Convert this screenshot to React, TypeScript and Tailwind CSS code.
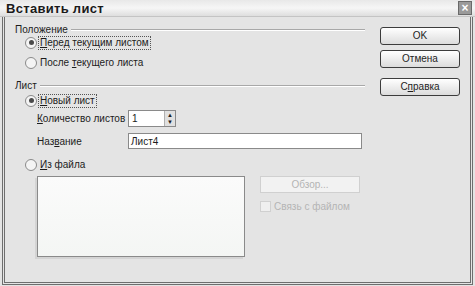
import React from "react";

function Radio({ checked, label, u }: { checked?: boolean; label: string; u: number }) {
  return (
    <div className="flex items-center gap-[1px] h-[13px]">
      <span className="w-[12px] h-[12px] rounded-full border border-[#8a8a8a] bg-[#f4f4f4] flex items-center justify-center">
        {checked && <span className="w-[5px] h-[5px] rounded-full bg-[#4a4a4a]" />}
      </span>
      <span className={checked ? "border border-dotted border-[#555] px-[1px] leading-[12px]" : "px-[2px] leading-[12px]"}>
        {label.slice(0, u - 1)}
        <span className="underline">{label.slice(u - 1, u)}</span>
        {label.slice(u)}
      </span>
    </div>
  );
}

function Legend({ text }: { text: string }) {
  return (
    <div className="flex items-center gap-[3px] h-[12px]">
      <span className="leading-[12px]">{text}</span>
      <div className="flex-1 border-t border-[#a8a8a8] border-b-white border-b h-0" />
    </div>
  );
}

function Btn({ label, u }: { label: string; u?: number }) {
  return (
    <button className="w-[80px] h-[18px] rounded-[3px] border border-[#3c3c3c] bg-gradient-to-b from-[#ffffff] to-[#dcdcdc] text-[10px] leading-[14px] text-[#1e1e1e]">
      {u !== undefined ? (
        <>
          {label.slice(0, u)}
          <span className="underline">{label.slice(u, u + 1)}</span>
          {label.slice(u + 1)}
        </>
      ) : (
        label
      )}
    </button>
  );
}

export default function App() {
  return (
    <div
      className="w-[475px] h-[286px] bg-[#e4e4e4] flex flex-col text-[10px] text-[#1c1c1c] overflow-hidden"
      style={{ fontFamily: '"Liberation Sans", Arial, sans-serif' }}
    >
      {/* title bar */}
      <div className="h-[17px] flex items-center justify-between bg-gradient-to-b from-[#e8e8e8] via-[#f6f6f6] to-[#dedede] border-b border-[#c4c4c4] pl-[6px] pr-[3px]">
        <span className="font-bold text-[13px] leading-[13px] tracking-[0.3px] text-[#1a1a1a]">
          Вставить лист
        </span>
        <span className="w-[14px] h-[14px] border border-[#6a6a6a] bg-[#9a9a9a] flex items-center justify-center text-white text-[12px] leading-[11px] font-bold">
          ×
        </span>
      </div>

      {/* window frame */}
      <div className="flex-1 mx-[2px] mb-[1px] border-l-[3px] border-r-[3px] border-b-[3px] border-double border-[#6e6e6e] flex">
        <div className="w-[360px] pl-[10px] pt-[7px] flex flex-col">
          <Legend text="Положение" />
          <div className="pl-[10px] flex flex-col gap-[7px]">
            <Radio checked label="Перед текущим листом" u={1} />
            <Radio label="После текущего листа" u={7} />
          </div>

          <div className="mt-[11px]">
            <Legend text="Лист" />
          </div>
          <div className="pl-[10px] pt-[2px] flex flex-col">
            <Radio checked label="Новый лист" u={1} />
            <div className="pl-[12px] pt-[3px] flex items-center h-[20px]">
              <span className="w-[91px] whitespace-nowrap">
                <span className="underline">К</span>оличество листов
              </span>
              <div className="w-[48px] h-[17px] border border-[#8a8a8a] bg-white flex items-center">
                <span className="flex-1 pl-[3px] leading-[11px]">1</span>
                <div className="w-[11px] h-[15px] flex flex-col border-l border-[#b0b0b0] bg-[#e0e0e0]">
                  <span className="flex-1 flex items-center justify-center text-[6px] leading-[6px]">▲</span>
                  <span className="flex-1 flex items-center justify-center text-[6px] leading-[6px]">▼</span>
                </div>
              </div>
            </div>
            <div className="pl-[12px] pt-[6px] flex items-center h-[22px]">
              <span className="w-[91px] whitespace-nowrap">
                Наз<span className="underline">в</span>ание
              </span>
              <div className="w-[234px] h-[16px] border border-[#8a8a8a] bg-white flex items-center pl-[2px] leading-[11px]">
                Лист4
              </div>
            </div>
            <div className="pt-[9px]">
              <Radio label="Из файла" u={1} />
            </div>
            <div className="pl-[12px] pt-[5px] flex gap-[15px]">
              <div className="w-[208px] h-[81px] border border-[#8a8a8a] bg-gradient-to-b from-[#fbfbfb] to-[#f4f6f4] shadow-[-2px_2px_0_#d4d4d4]" />
              <div className="flex flex-col gap-[6px]">
                <div className="w-[100px] h-[17px] border border-[#d0d0d0] bg-[#f2f2f2] text-[#b4b4b4] flex items-center justify-center leading-[11px]">
                  Обзор...
                </div>
                <div className="flex items-center gap-[3px] text-[#b4b4b4] text-[10px]">
                  <span className="w-[11px] h-[11px] border border-[#d0d0d0] bg-[#efefef]" />
                  <span>Связь с файлом</span>
                </div>
              </div>
            </div>
          </div>
        </div>

        <div className="flex-1 pt-[10px] pl-[15px] flex flex-col gap-[5px]">
          <Btn label="OK" />
          <Btn label="Отмена" />
          <div className="mt-[5px]">
            <Btn label="Справка" u={1} />
          </div>
        </div>
      </div>
    </div>
  );
}
